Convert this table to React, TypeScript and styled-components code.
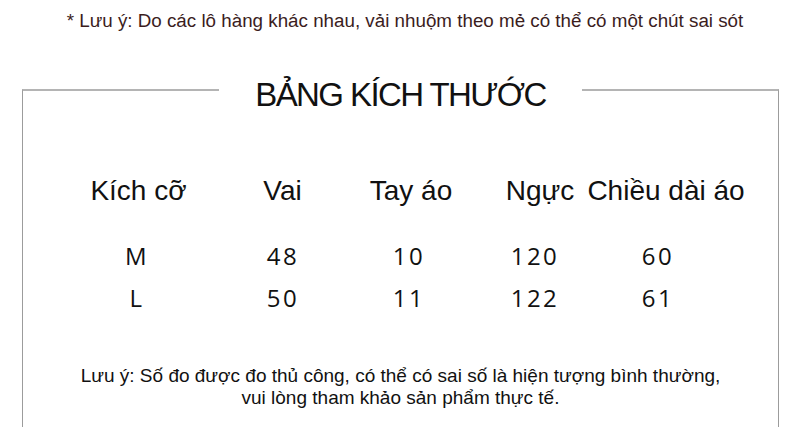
import styled, { createGlobalStyle } from "styled-components";

const GlobalStyle = createGlobalStyle`
  html, body {
    margin: 0;
    padding: 0;
    background: #ffffff;
  }
  body {
    font-family: "Liberation Sans", Arial, sans-serif;
    overflow: hidden;
  }
`;

const Page = styled.div`
  width: 800px;
  height: 427px;
  overflow: hidden;
  background: #ffffff;
`;

const TopNote = styled.p`
  margin: 0;
  padding: 10px 0 0 10px;
  font-size: 18.8px;
  line-height: 21px;
  color: #3b1d1d;
  text-align: center;
`;

const Frame = styled.fieldset`
  margin: 35px 21px 0 22px;
  padding: 0 0 40px;
  min-width: 0;
  border: 1px solid #9c9c9c;
  border-top: 2px solid #b4b4b4;
  border-bottom: none;
`;

const Title = styled.legend`
  margin: 0 auto;
  padding: 10px 36px 0;
  font-size: 33px;
  line-height: 38px;
  color: #111111;
  letter-spacing: -1.6px;
`;

const Table = styled.div`
  margin-top: 60px;
  padding-left: 43px;
`;

const Row = styled.div<{ $cols: string; $header?: boolean }>`
  display: grid;
  grid-template-columns: ${({ $cols }) => $cols};
  color: #111111;
  font-family: ${({ $header }) =>
    $header ? `"Liberation Sans", Arial, sans-serif` : `"Open Sans", "Noto Sans", sans-serif`};
  font-size: ${({ $header }) => ($header ? "28px" : "24px")};
  line-height: ${({ $header }) => ($header ? "34px" : "42px")};
  letter-spacing: ${({ $header }) => ($header ? "0" : "2.5px")};
  margin-bottom: ${({ $header }) => ($header ? "27px" : "0")};
`;

const Cell = styled.div`
  display: flex;
  justify-content: center;
  white-space: nowrap;
`;

const Note = styled.p`
  margin: 46px 0 0;
  font-size: 19px;
  line-height: 22px;
  color: #111111;
  text-align: center;
`;

const headers = ["Kích cỡ", "Vai", "Tay áo", "Ngực", "Chiều dài áo"];

const sizes = [
  ["M", "48", "10", "120", "60"],
  ["L", "50", "11", "122", "61"],
];

const HEADER_COLS = "145px 143px 114px 144px 108px";
const DATA_COLS = "142px 150px 102px 150px 96px";

export default function App() {
  return (
    <Page>
      <GlobalStyle />
      <TopNote>
        * Lưu ý: Do các lô hàng khác nhau, vải nhuộm theo mẻ có thể có một chút sai sót
      </TopNote>
      <Frame>
        <Title>BẢNG KÍCH THƯỚC</Title>
        <Table>
          <Row $cols={HEADER_COLS} $header>
            {headers.map((h) => (
              <Cell key={h}>{h}</Cell>
            ))}
          </Row>
          {sizes.map((row) => (
            <Row key={row[0]} $cols={DATA_COLS}>
              {row.map((v, i) => (
                <Cell key={i}>{v}</Cell>
              ))}
            </Row>
          ))}
        </Table>
        <Note>
          Lưu ý: Số đo được đo thủ công, có thể có sai số là hiện tượng bình thường,
          <br />
          vui lòng tham khảo sản phẩm thực tế.
        </Note>
      </Frame>
    </Page>
  );
}
